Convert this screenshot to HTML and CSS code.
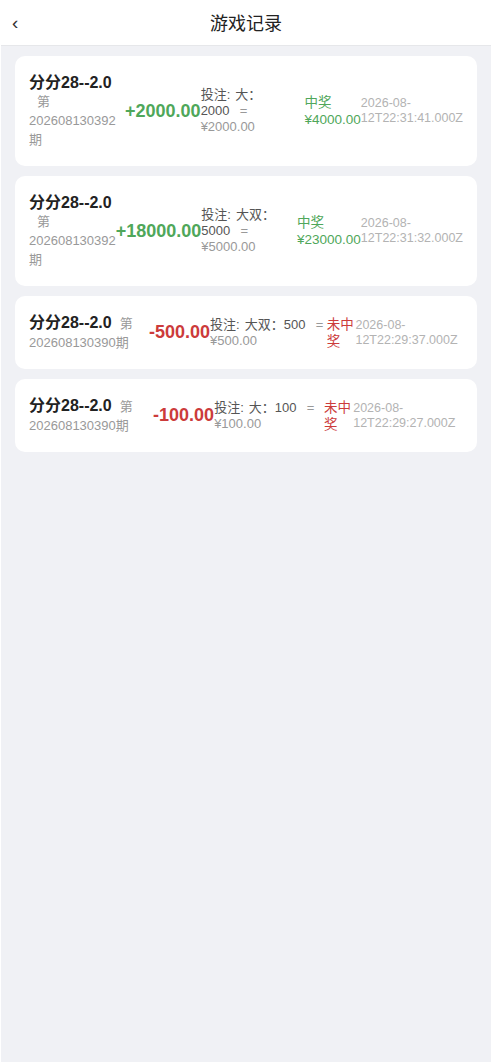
FILE: index.html
```html
<!DOCTYPE html>
<html lang="zh-CN">
<head>
<meta charset="utf-8">
<title>游戏记录</title>
<link rel="stylesheet" href="styles.css">
</head>
<body>
<div class="app">
  <header class="topbar">
    <span class="back">‹</span>
    <h1 class="page-title">游戏记录</h1>
    <span class="spacer"></span>
  </header>
  <main class="list">
    <div class="card">
      <div class="info"><span class="game">分分28--2.0</span><span class="issue">第202608130392期</span></div>
      <div class="amount win">+2000.00</div>
      <div class="bet"><span class="pick">投注: 大：2000</span>&nbsp;&nbsp;<span class="cost">= ¥2000.00</span></div>
      <div class="result win">中奖 ¥4000.00</div>
      <div class="time">2026-08-12T22:31:41.000Z</div>
    </div>
    <div class="card">
      <div class="info"><span class="game">分分28--2.0</span><span class="issue">第202608130392期</span></div>
      <div class="amount win">+18000.00</div>
      <div class="bet"><span class="pick">投注: 大双：5000</span>&nbsp;&nbsp;<span class="cost">= ¥5000.00</span></div>
      <div class="result win">中奖 ¥23000.00</div>
      <div class="time">2026-08-12T22:31:32.000Z</div>
    </div>
    <div class="card">
      <div class="info"><span class="game">分分28--2.0</span><span class="issue">第202608130390期</span></div>
      <div class="amount lose">-500.00</div>
      <div class="bet"><span class="pick">投注: 大双：500</span>&nbsp;&nbsp;<span class="cost">= ¥500.00</span></div>
      <div class="result lose">未中奖</div>
      <div class="time">2026-08-12T22:29:37.000Z</div>
    </div>
    <div class="card">
      <div class="info"><span class="game">分分28--2.0</span><span class="issue">第202608130390期</span></div>
      <div class="amount lose">-100.00</div>
      <div class="bet"><span class="pick">投注: 大：100</span>&nbsp;&nbsp;<span class="cost">= ¥100.00</span></div>
      <div class="result lose">未中奖</div>
      <div class="time">2026-08-12T22:29:27.000Z</div>
    </div>
  </main>
</div>
</body>
</html>
```
FILE: styles.css
```css
* {
  box-sizing: border-box;
}

html,
body {
  margin: 0;
  padding: 0;
  background: #ffffff;
}

body {
  font-family: "Liberation Sans", Arial, "Noto Sans CJK SC", sans-serif;
  color: #333333;
}

.app {
  min-height: 1062px;
  margin-left: 1px;
  background: #f0f1f5;
}

.topbar {
  height: 46px;
  background: #ffffff;
  border-bottom: 1px solid #e6e7ea;
  display: grid;
  grid-template-columns: 40px 1fr 40px;
  align-items: center;
}

.back {
  padding-left: 11px;
  font-size: 19px;
  line-height: 20px;
  color: #333333;
}

.page-title {
  margin: 0;
  padding-top: 2px;
  text-align: center;
  font-size: 18px;
  font-weight: normal;
  color: #222222;
  line-height: 24px;
}

.list {
  padding: 10px 14px;
  display: flex;
  flex-direction: column;
  gap: 10px;
}

.card {
  background: #ffffff;
  border-radius: 10px;
  padding: 17px 14px;
  display: flex;
  align-items: center;
}

.info {
  flex-shrink: 1.4;
  line-height: 18px;
}

.game {
  font-size: 16px;
  font-weight: bold;
  color: #222222;
  line-height: 19px;
}

.issue {
  margin-left: 8px;
  font-size: 13px;
  color: #999999;
}

.amount {
  font-size: 18px;
  font-weight: bold;
  white-space: nowrap;
}

.amount.win {
  color: #4fa75a;
}

.amount.lose {
  color: #cc3b3b;
}

.bet {
  font-size: 13px;
  line-height: 16px;
  word-spacing: 1.5px;
}

.pick {
  color: #555555;
}

.cost {
  color: #999999;
}

.result {
  font-size: 13.5px;
  line-height: 17px;
}

.result.win {
  color: #4fa75a;
}

.result.lose {
  color: #cc3b3b;
}

.time {
  font-size: 12.5px;
  line-height: 15px;
  color: #b3b3b3;
}
```
